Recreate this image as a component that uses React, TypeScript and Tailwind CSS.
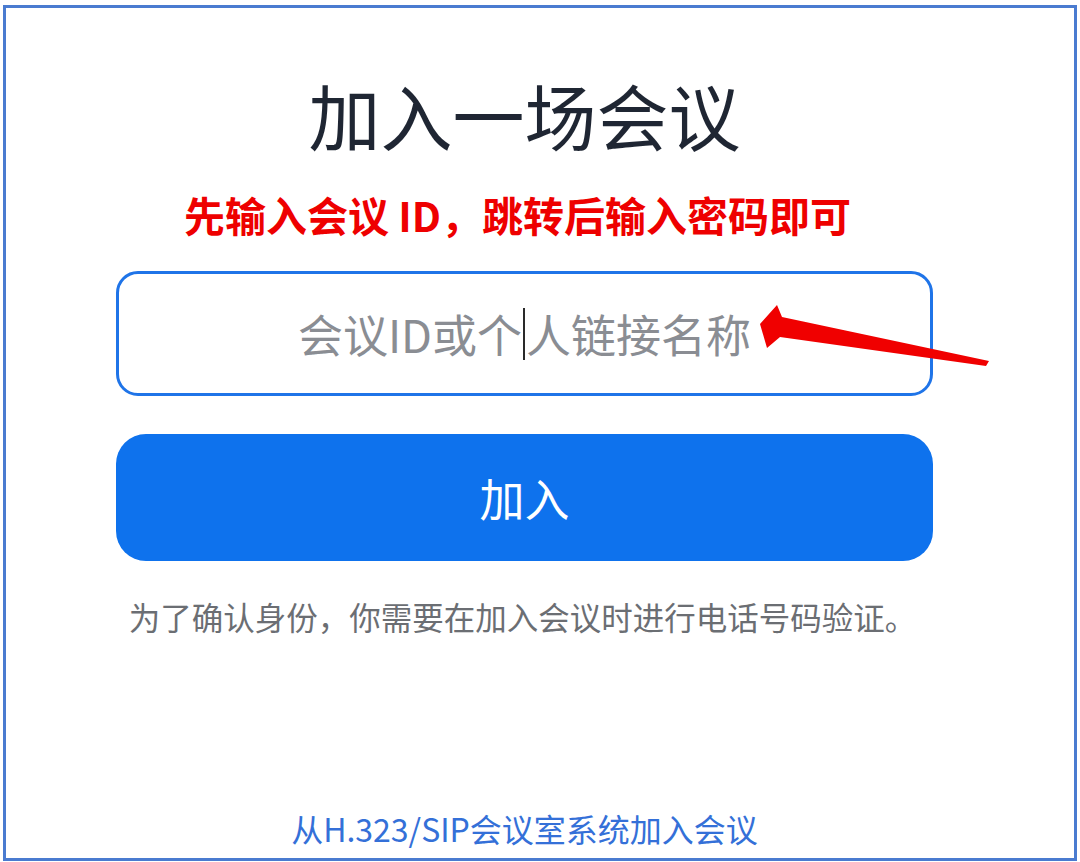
import React from "react";

const font = "font-['Noto_Sans_CJK_SC','Noto_Sans',sans-serif]";

function RedArrow() {
  return (
    <svg
      className="pointer-events-none absolute left-0 top-0"
      width="1080"
      height="862"
      viewBox="0 0 1080 862"
    >
      <polygon
        points="760,324 777,305 782,317 989,361 986,366 780,337 767,348"
        fill="#f00000"
      />
    </svg>
  );
}

export default function App() {
  return (
    <div className={`relative h-[862px] w-[1080px] overflow-hidden bg-white ${font}`}>
      <div className="ml-[3px] mt-[5px] flex h-[856px] w-[1074px] flex-col border-[3px] border-[#4a7bd0] bg-white">
        <div className="ml-[110px] flex w-[817px] flex-1 flex-col items-center">
          <h1 className="mt-[61px] h-[90px] text-[72px] leading-[90px] font-normal text-[#1f2633]">
            加入一场会议
          </h1>

          <p className="mr-[14px] mt-[30px] h-[50px] text-[41px] leading-[50px] font-bold text-[#ee0000]">
            先输入会议 ID，跳转后输入密码即可
          </p>

          <div className="mt-[32px] flex h-[125px] w-full items-center justify-center rounded-[22px] border-[3px] border-[#1f74e8]">
            <span className="flex items-center text-[45px] leading-[56px] text-[#8a8d93]">
              会议ID或个
              <span className="mx-[1px] inline-block h-[52px] w-[2px] bg-[#2a2a2a]" />
              人链接名称
            </span>
          </div>

          <button className="mt-[38px] flex h-[127px] w-full items-center justify-center rounded-[30px] bg-[#0e72ed] text-[45px] leading-[56px] text-white">
            加入
          </button>

          <p className="mr-[4px] mt-[33px] h-[44px] text-[31.5px] leading-[44px] text-[#6b6e73]">
            为了确认身份，你需要在加入会议时进行电话号码验证。
          </p>

          <div className="flex-1" />

          <a className="mb-[10px] h-[40px] text-[32px] leading-[40px] text-[#3470d8]">
            从H.323/SIP会议室系统加入会议
          </a>
        </div>
      </div>
      <RedArrow />
    </div>
  );
}
